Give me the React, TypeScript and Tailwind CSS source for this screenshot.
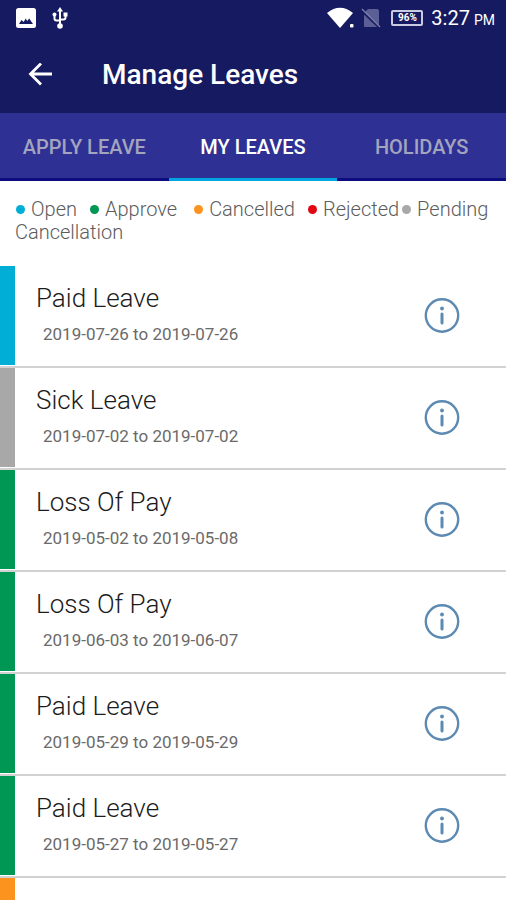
/**
 * @file App.tsx
 * @description "Manage Leaves" screen: status bar, app bar, tabs,
 *              status legend and the list of the user's leaves.
 */

import { useState } from 'react';
import { clsx } from 'clsx';

type Status = 'open' | 'approve' | 'cancelled' | 'rejected' | 'pending';

type Leave = {
  title?: string;
  from?: string;
  to?: string;
  status: Status;
};

/** Background colour for each leave status */
const STATUS_BG: Record<Status, string> = {
  open: 'bg-[#00aed6]',
  approve: 'bg-[#009653]',
  cancelled: 'bg-[#fd931f]',
  rejected: 'bg-[#e30613]',
  pending: 'bg-[#a8a8a8]',
};

const TABS = ['Apply Leave', 'My Leaves', 'Holidays'];

const LEGEND: { status: Status; label: string; gap: string }[] = [
  { status: 'open', label: 'Open', gap: 'mr-3' },
  { status: 'approve', label: 'Approve', gap: 'mr-4' },
  { status: 'cancelled', label: 'Cancelled', gap: 'mr-3' },
  { status: 'rejected', label: 'Rejected', gap: 'mr-0.5' },
  { status: 'pending', label: 'Pending Cancellation', gap: 'mr-0' },
];

const LEAVES: Leave[] = [
  { title: 'Paid Leave', from: '2019-07-26', to: '2019-07-26', status: 'open' },
  { title: 'Sick Leave', from: '2019-07-02', to: '2019-07-02', status: 'pending' },
  { title: 'Loss Of Pay', from: '2019-05-02', to: '2019-05-08', status: 'approve' },
  { title: 'Loss Of Pay', from: '2019-06-03', to: '2019-06-07', status: 'approve' },
  { title: 'Paid Leave', from: '2019-05-29', to: '2019-05-29', status: 'approve' },
  { title: 'Paid Leave', from: '2019-05-27', to: '2019-05-27', status: 'approve' },
  { status: 'cancelled' },
];

/** Device status bar: notifications on the left, signal and clock on the right */
function StatusBar() {
  return (
    <div className="flex h-9 items-center justify-between pr-[11px] pl-4 text-white">
      <div className="flex items-center gap-4">
        <svg viewBox="0 0 20 20" className="size-5" aria-hidden="true">
          <rect width="20" height="20" rx="2.5" fill="currentColor" />
          <path d="M3 16l2.500-4 2.200 2 2-3.500 1.500 2.500 2-2.500L17 16z" fill="#161a60" />
        </svg>
        <svg viewBox="0 0 16 22" className="h-[22px] w-4" fill="none" stroke="currentColor" strokeWidth="2" aria-hidden="true">
          <path d="M8 3v15M2.500 7v4.500q0 2 2 2H8M13.500 7v3.500q0 2-2 2H8" />
          <path d="M8 0l3 4.500H5z" fill="currentColor" stroke="none" />
          <circle cx="8" cy="19" r="2.800" fill="currentColor" stroke="none" />
          <circle cx="2.500" cy="7.500" r="2" fill="currentColor" stroke="none" />
          <path d="M11.500 5.500h4v4h-4z" fill="currentColor" stroke="none" />
        </svg>
      </div>

      <div className="flex items-center">
        <svg viewBox="0 0 28 22" className="h-[22px] w-7" fill="currentColor" aria-hidden="true">
          <path d="M0 6Q13 -4.500 26 6L13 21z" />
          <rect x="23" y="17" width="3.500" height="3.500" rx="1" />
        </svg>
        <svg viewBox="0 0 20 20" className="ml-1.5 h-5 w-5" aria-hidden="true">
          <path d="M7 1h9q2 0 2 2v15q0 1-1 1H4q-1 0-1-1V5z" fill="#5b5f96" />
          <path d="M0 2l19 18" stroke="#161a60" strokeWidth="2.500" />
          <path d="M1 1l18 18" stroke="#7d80ad" strokeWidth="1.200" />
        </svg>
        <span className="ml-2.5 flex h-4 w-8 items-center justify-center rounded-xs border-2 border-[#c9cbe0] text-[10px] leading-none font-bold">
          96%
        </span>
        <span className="ml-2 text-xl leading-none">3:27</span>
        <span className="mt-1 ml-1 text-sm leading-none">PM</span>
      </div>
    </div>
  );
}

/** Outlined "i" used as the details button of a leave */
function InfoIcon() {
  return (
    <svg viewBox="0 0 36 36" className="size-9" fill="none" stroke="#5c8ab2" aria-hidden="true">
      <circle cx="18" cy="17.500" r="16.200" strokeWidth="2.400" />
      <path d="M18 16v9" strokeWidth="3" strokeLinecap="round" />
      <circle cx="18" cy="10.500" r="1.900" fill="#5c8ab2" stroke="none" />
    </svg>
  );
}

function LeaveRow({ leave }: { leave: Leave }) {
  return (
    <li className="flex h-[102px] shrink-0 border-b-2 border-[#d2d2d2]">
      <span className={clsx('mb-px w-[15px] shrink-0', STATUS_BG[leave.status])} />
      {leave.title && (
        <div className="flex flex-1 items-center justify-between pr-[46px] pl-[21px]">
          <div>
            <h2 className="text-[26px] leading-8 font-light text-[#1c1c1c]">{leave.title}</h2>
            <p className="mt-1 pl-[7px] text-[17px] leading-8 text-[#6a6a6a]">
              {leave.from} to {leave.to}
            </p>
          </div>
          <button type="button" aria-label={`Details of ${leave.title}, ${leave.from}`}>
            <InfoIcon />
          </button>
        </div>
      )}
    </li>
  );
}

export default function App() {
  const [active, setActive] = useState('My Leaves');

  return (
    <div className="flex h-screen flex-col overflow-hidden bg-white font-['Roboto',sans-serif]">
      <header className="bg-[#161a60]">
        <StatusBar />
        <div className="flex h-[77px] items-center pl-7 text-white">
          <button type="button" aria-label="Back">
            <svg viewBox="0 0 24 24" className="size-6" fill="none" stroke="currentColor" strokeWidth="2.800" aria-hidden="true">
              <path d="M24 11H3M13 .5L2.500 11 13 21.500" />
            </svg>
          </button>
          <h1 className="ml-[50px] text-[28px] leading-8 font-medium">Manage Leaves</h1>
        </div>
      </header>

      <nav className="flex h-[68px] shrink-0 bg-[#2f3094]">
        {TABS.map((tab) => (
          <button
            key={tab}
            type="button"
            onClick={() => setActive(tab)}
            className={clsx(
              'flex-1 basis-0 border-b-3 pt-0.5 text-xl font-medium uppercase',
              tab === active ? 'border-[#00a5e0] text-white' : 'border-[#0d0d80] text-[#a3a4bd]'
            )}
          >
            {tab}
          </button>
        ))}
      </nav>

      {/* Colour legend */}
      <p className="px-[15px] pt-[17px] pb-[22px] text-xl leading-[23px] font-light text-[#5c5c5c]">
        {LEGEND.map(({ status, label, gap }) => (
          <span key={status}>
            <span className={clsx('mr-1.5 mb-[3px] ml-px inline-block size-[9px] rounded-full align-middle', STATUS_BG[status])} />
            <span className={gap}>{label}</span>
          </span>
        ))}
      </p>

      <ul className="flex min-h-0 flex-1 flex-col overflow-hidden">
        {LEAVES.map((leave, i) => (
          <LeaveRow key={i} leave={leave} />
        ))}
      </ul>
    </div>
  );
}
